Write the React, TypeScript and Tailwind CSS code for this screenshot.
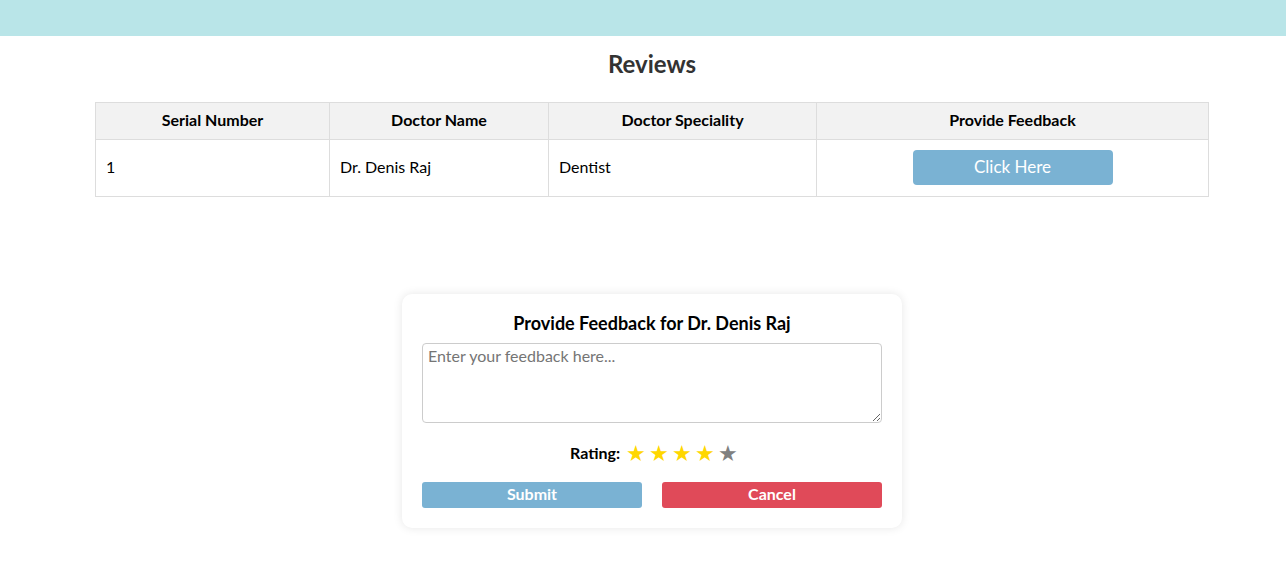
import React from "react";

export default function App() {
  const font = { fontFamily: "Lato, 'Noto Sans', sans-serif" };
  return (
    <div className="min-h-[578px] bg-white text-black" style={font}>
      <div className="h-[36px] bg-[#b9e5e8]" />
      <div className="pl-[18px]">
        <h2 className="mt-[14px] text-center text-[24px] font-bold leading-[28px] text-[#333]">Reviews</h2>
        <div className="mx-auto mt-[24px] w-[1114px]">
          <table className="w-full border-collapse text-[16px]">
            <thead>
              <tr className="h-[37px] bg-[#f2f2f2]">
                <th className="w-[234px] border border-[#dddddd] pb-[3px] font-bold">Serial Number</th>
                <th className="w-[219px] border border-[#dddddd] pb-[3px] font-bold">Doctor Name</th>
                <th className="w-[268px] border border-[#dddddd] pb-[3px] font-bold">Doctor Speciality</th>
                <th className="border border-[#dddddd] pb-[3px] font-bold">Provide Feedback</th>
              </tr>
            </thead>
            <tbody>
              <tr className="h-[57px]">
                <td className="border border-[#dddddd] px-[10px] pb-[2px]">1</td>
                <td className="border border-[#dddddd] px-[10px] pb-[2px]">Dr. Denis Raj</td>
                <td className="border border-[#dddddd] px-[10px] pb-[2px]">Dentist</td>
                <td className="border border-[#dddddd] px-[10px] text-center">
                  <button className="mb-[1px] h-[35px] w-[200px] rounded-[4px] bg-[#7ab2d3] pb-[2px] text-[17px] text-white">Click Here</button>
                </td>
              </tr>
            </tbody>
          </table>
        </div>
        <div className="mx-auto mt-[97px] w-[500px] rounded-[10px] bg-white p-[20px] shadow-[0_0_10px_rgba(0,0,0,0.1)]">
          <h3 className="mb-[11px] text-center text-[18px] font-bold leading-[18px]">Provide Feedback for Dr. Denis Raj</h3>
          <textarea
            className="block h-[80px] w-full rounded-[4px] border border-[#cccccc] px-[5px] pt-0 text-[16px] placeholder:text-[#757575]"
            placeholder="Enter your feedback here..."
          />
          <div className="mt-[18px] flex items-center justify-center gap-[3px] pl-[4px]">
            <span className="mr-[3px] text-[16px] font-bold">Rating:</span>
            <span className="text-[22px] leading-none text-[#ffd700]">★</span>
            <span className="text-[22px] leading-none text-[#ffd700]">★</span>
            <span className="text-[22px] leading-none text-[#ffd700]">★</span>
            <span className="text-[22px] leading-none text-[#ffd700]">★</span>
            <span className="text-[22px] leading-none text-[#808080]">★</span>
          </div>
          <div className="mt-[17px] flex gap-[20px]">
            <button className="h-[26px] flex-1 rounded-[3px] bg-[#7ab2d3] pb-[3px] text-[16px] font-bold text-white">Submit</button>
            <button className="h-[26px] flex-1 rounded-[3px] bg-[#e04a59] pb-[3px] text-[16px] font-bold text-white">Cancel</button>
          </div>
        </div>
      </div>
    </div>
  );
}
